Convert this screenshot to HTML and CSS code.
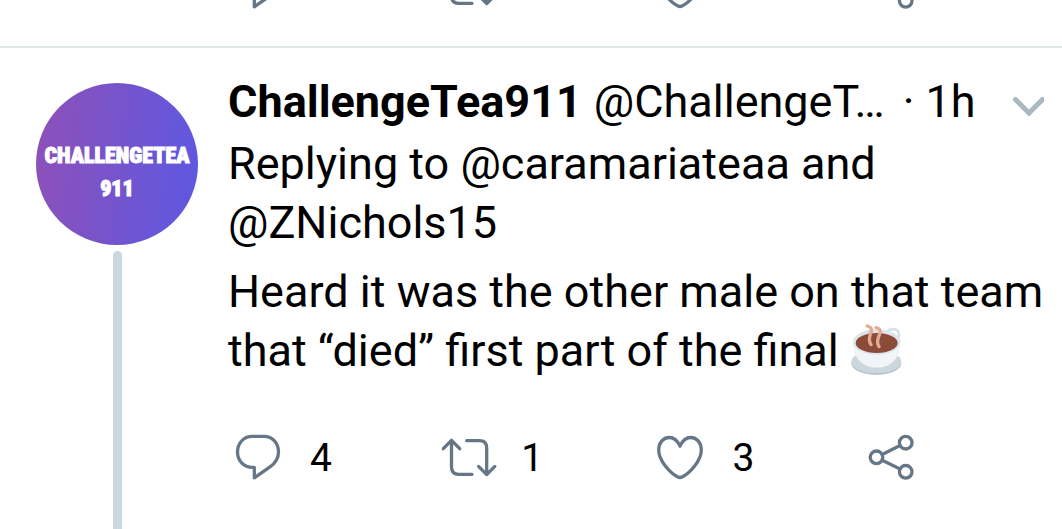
FILE: index.html
```
<!DOCTYPE html>
<html lang="en">
<head>
    <meta charset="UTF-8">
    <meta name="viewport" content="width=device-width, initial-scale=1.0">
    <title>ChallengeTea911</title>
    <link rel="stylesheet" href="styles.css">
</head>
<body>
    <!-- shared icons -->
    <svg class="sprite" aria-hidden="true">
        <symbol id="icon-reply" viewBox="0 0 60 48">
            <path d="M24 3.4H36C44.5 3.4 50.5 10 50.5 18.8C50.5 25.5 47 30.5 42 33.8L26.3 44.8V34.3H24.5C15.5 34.3 9.5 27.5 9.5 19C9.5 10.5 15.5 3.4 24 3.4Z"/>
        </symbol>
        <symbol id="icon-retweet" viewBox="0 0 60 48">
            <path d="M4.3 15.7L12.5 7.3L20.7 15.7M12.5 8V34Q12.5 41.3 19.8 41.3H33M27.7 7.7H40.5Q47.7 7.7 47.7 15V41M39.6 33.4L47.7 41.6L55.8 33.4"/>
        </symbol>
        <symbol id="icon-like" viewBox="0 0 60 48">
            <path d="M30 13.2C27.5 7.5 23.8 4.5 19.3 4.5C13 4.5 8.7 10 8.7 17C8.7 28 20.5 40.5 28 44Q30 45 32 44C39.5 40.5 51.3 28 51.3 17C51.3 10 47 4.5 40.7 4.5C36.2 4.5 32.5 7.5 30 13.2Z"/>
        </symbol>
        <symbol id="icon-share" viewBox="0 0 60 48">
            <circle cx="14.5" cy="24.3" r="6.3"/>
            <circle cx="43.7" cy="9.7" r="6.3"/>
            <circle cx="43.7" cy="38.8" r="6.3"/>
            <path d="M20.2 21.4L38 12.5M20.2 27.2L38 36"/>
        </symbol>
    </svg>

    <article class="tweet-above">
        <div class="content">
            <div class="actions">
                <button type="button" aria-label="Reply"><svg class="icon"><use href="#icon-reply"/></svg></button>
                <button type="button" aria-label="Retweet"><svg class="icon"><use href="#icon-retweet"/></svg><span>1</span></button>
                <button type="button" aria-label="Like"><svg class="icon"><use href="#icon-like"/></svg><span>4</span></button>
                <button type="button" aria-label="Share"><svg class="icon"><use href="#icon-share"/></svg></button>
            </div>
        </div>
    </article>

    <article class="tweet">
        <div class="side">
            <div class="avatar">
                <span>CHALLENGETEA</span>
                <span>911</span>
            </div>
            <div class="thread-line"></div>
        </div>
        <div class="content">
            <header class="head">
                <strong>ChallengeTea911</strong>
                <span class="handle">@ChallengeT…</span>
                <span class="time">· 1h</span>
                <button type="button" class="more" aria-label="More">
                    <svg viewBox="0 0 32 20"><path d="M3.5 3.5L17 17L30.5 3.5"/></svg>
                </button>
            </header>
            <p class="replying">Replying to @caramariateaa and @ZNichols15</p>
            <p class="text">Heard it was the other male on that team that “died” first part of the final
                <svg class="emoji" viewBox="62 42 156 156" role="img" aria-label="Hot beverage">
                    <ellipse cx="141" cy="160" rx="75" ry="35" fill="#b8c7d0"/>
                    <ellipse cx="141" cy="155" rx="75" ry="34" fill="#ccd6dd"/>
                    <path d="M172 66C184 54 202 55 207 66C212 79 208 92 196 99" fill="none" stroke="#d8e1e8" stroke-width="8"/>
                    <path d="M71 98C70 137 95 173 142 173C189 173 215 137 213 98Z" fill="#f1f5f8"/>
                    <ellipse cx="142" cy="96" rx="71" ry="38" fill="#dce4ea"/>
                    <ellipse cx="142" cy="99" rx="63" ry="30" fill="#8a4b38"/>
                    <path d="M114 48C132 53 126 63 123 73C119 85 118 94 125 104M140 53C158 57 153 68 148 80C144 91 142 100 149 110" fill="none" stroke="#e6aa90" stroke-width="10" stroke-linecap="round"/>
                </svg>
            </p>
            <div class="actions">
                <button type="button" aria-label="Reply"><svg class="icon"><use href="#icon-reply"/></svg><span>4</span></button>
                <button type="button" aria-label="Retweet"><svg class="icon"><use href="#icon-retweet"/></svg><span>1</span></button>
                <button type="button" aria-label="Like"><svg class="icon"><use href="#icon-like"/></svg><span>3</span></button>
                <button type="button" aria-label="Share"><svg class="icon"><use href="#icon-share"/></svg></button>
            </div>
        </div>
    </article>
</body>
</html>
```
FILE: styles.css
```
* {
    box-sizing: border-box;
}
body {
    margin: 0;
    background-color: #fff;
    color: #000;
    font-family: Roboto, Arial, sans-serif;
    font-size: 45px;
    line-height: 59px;
}
p {
    margin: 0;
}
button {
    padding: 0;
    border: none;
    background: none;
    color: inherit;
    font: inherit;
    cursor: pointer;
}
.sprite {
    display: none;
}

/* only the bottom edge of this one is in view */
.tweet-above {
    display: flex;
    flex-direction: column;
    justify-content: flex-end;
    height: 48px;
    padding: 0 18px 36px 228px;
    border-bottom: 2px solid #e1e8ea;
    overflow: hidden;
}
.tweet {
    display: flex;
    gap: 30px;
    padding: 0 18px 0 36px;
}
.side {
    display: flex;
    flex-direction: column;
    align-items: center;
    flex: none;
    width: 162px;
    padding-top: 35px;
}
.avatar {
    display: flex;
    flex-direction: column;
    align-items: center;
    justify-content: center;
    flex: none;
    width: 162px;
    height: 162px;
    padding-top: 16px;
    border-radius: 50%;
    background: linear-gradient(97deg, #8f50b8, #5c58e2);
    color: #fff;
    font-family: "Roboto Condensed", "Liberation Sans Narrow", Roboto, sans-serif;
    font-size: 22px;
    font-weight: 900;
    line-height: 33px;
    -webkit-text-stroke: 1px #fff;
}
.thread-line {
    flex: 1;
    width: 9px;
    margin-top: 6px;
    border-radius: 5px 5px 0 0;
    background-color: #ccd6dd;
}
.content {
    flex: 1;
    min-width: 0;
}
.tweet-above .content {
    flex: none;
}
.tweet .content {
    padding: 24px 0 48px;
}
.head {
    display: flex;
    align-items: center;
    white-space: nowrap;
}
.handle {
    margin-left: 12px;
}
.time {
    margin-left: 18px;
}
.more {
    display: flex;
    margin-left: auto;
    padding-top: 9px;
}
.more svg {
    width: 32px;
    height: 20px;
    fill: none;
    stroke: #aab8c2;
    stroke-width: 5;
    stroke-linecap: round;
}
.replying {
    margin-top: 3px;
}
.text {
    margin-top: 10px;
}
.emoji {
    width: 52px;
    height: 52px;
    vertical-align: -10px;
}
.actions {
    display: grid;
    grid-template-columns: repeat(3, 1fr) 60px;
    width: 85%;
    font-size: 39px;
    line-height: 48px;
}
.text + .actions {
    margin-top: 53px;
}
.actions button {
    display: flex;
    align-items: center;
    gap: 22px;
}
.actions span {
    padding-top: 2px;
    line-height: 46px;
}
.icon {
    flex: none;
    width: 60px;
    height: 48px;
    fill: none;
    stroke: #657786;
    stroke-width: 3.3;
    stroke-linecap: round;
    stroke-linejoin: round;
}
```
